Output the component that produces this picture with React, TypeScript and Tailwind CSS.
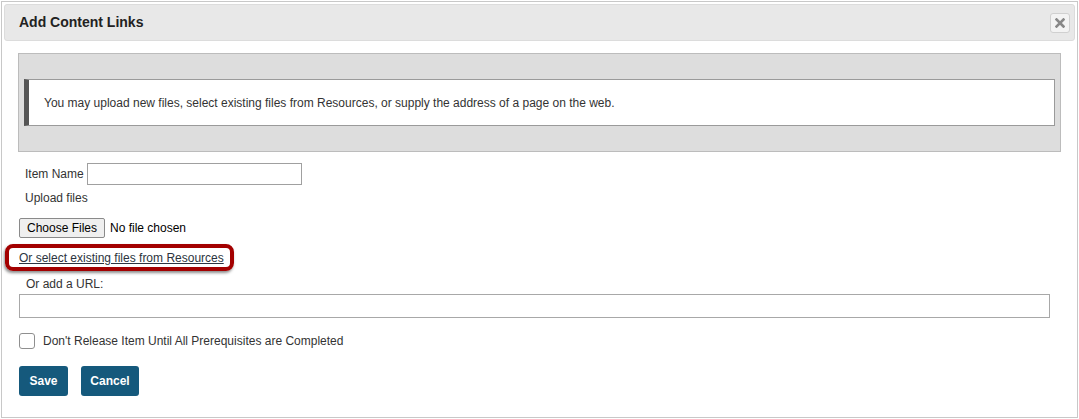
// Modal dialog for adding content links to a lesson item.
const FONT = "font-['Liberation_Sans',Arial,sans-serif]";

function CloseButton() {
  return (
    <button
      type="button"
      title="Close"
      className="flex h-[20px] w-[20px] items-center justify-center rounded-[3px] border border-[#d0d0d0] bg-[#f3f3f3]"
    >
      <svg width="10" height="10" viewBox="0 0 10 10">
        <path d="M1.5 1.5 L8.5 8.5 M8.5 1.5 L1.5 8.5" stroke="#888" strokeWidth="2.6" strokeLinecap="square" />
      </svg>
    </button>
  );
}

export default function App() {
  return (
    <div className={`${FONT} pl-px pt-px text-[12px] text-[#333]`}>
      <div className="flex h-[417px] w-[1077px] flex-col border border-[#c8c8c8] bg-white">
        <div className="mx-[2px] mt-[2px] flex h-[37px] items-center justify-between rounded-[3px] border border-[#dcdcdc] bg-[#e8e8e8] pl-[14px] pr-[4px]">
          <span className="text-[14px] font-bold text-[#222]">Add Content Links</span>
          <CloseButton />
        </div>

        <div className="ml-[16px] mt-[12px] w-[1043px] border border-[#bcbcbc] bg-[#dddddd] px-[5px] py-[25px]">
          <div className="flex h-[47px] items-center border border-l-[5px] border-[#9a9a9a] border-l-[#555] bg-white pl-[15px]">
            You may upload new files, select existing files from Resources, or supply the address of a page on the web.
          </div>
        </div>

        <div className="flex flex-col pl-[17px]">
          <div className="mt-[11px] flex h-[22px] items-center">
            <span className="ml-[6px]">Item Name</span>
            <input type="text" className="ml-[3px] h-[22px] w-[215px] border border-[#a0a0a0] bg-white" />
          </div>

          <div className="ml-[6px] mt-[5px] flex h-[16px] items-center">Upload files</div>

          <div className="mt-[12px] flex h-[20px] items-center">
            <span className="flex h-[20px] w-[86px] items-center justify-center rounded-[2px] border border-[#8a8a8a] bg-[#efefef] text-black">
              Choose Files
            </span>
            <span className="ml-[5px] text-black">No file chosen</span>
          </div>

          <div className="mt-[6px] flex">
            <a
              href="#"
              className="-ml-[14px] flex h-[27px] w-[229px] items-center whitespace-nowrap rounded-[8px] border-[4px] border-[#a30000] pl-[10px] text-[#2c3440] underline shadow-[-1px_2px_3px_rgba(0,0,0,0.45)]"
            >
              Or select existing files from Resources
            </a>
          </div>

          <div className="ml-[7px] mt-[5px] flex h-[16px] items-center">Or add a URL:</div>

          <input type="text" className="mt-[2px] h-[24px] w-[1031px] border border-[#a8a8a8] bg-white" />

          <div className="mt-[15px] flex h-[16px] items-center">
            <span className="h-[16px] w-[16px] rounded-[3px] border border-[#8f8f8f] bg-white" />
            <span className="ml-[8px]">Don't Release Item Until All Prerequisites are Completed</span>
          </div>

          <div className="mt-[17px] flex gap-[13px]">
            <button type="button" className="h-[30px] w-[49px] rounded-[3px] bg-[#15597c] font-bold text-white">
              Save
            </button>
            <button type="button" className="h-[30px] w-[58px] rounded-[3px] bg-[#15597c] font-bold text-white">
              Cancel
            </button>
          </div>
        </div>
      </div>
    </div>
  );
}
